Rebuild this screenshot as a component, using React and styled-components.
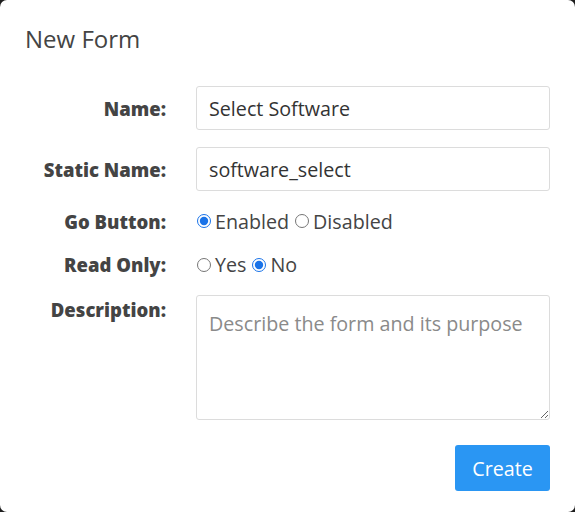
import React, { useState } from "react";
import styled, { createGlobalStyle } from "styled-components";

const GlobalStyle = createGlobalStyle`
  html, body {
    margin: 0;
    padding: 0;
    background: #1e1e1e;
  }
  * {
    box-sizing: border-box;
  }
`;

const Card = styled.div`
  width: 575px;
  height: 512px;
  background: #fff;
  border-radius: 7px;
  padding: 22px 25px 20px 25px;
  font-family: "Open Sans", Lato, sans-serif;
  color: #333;
`;

const Title = styled.h2`
  margin: 0 0 30px 0;
  font-size: 24px;
  font-weight: 400;
  color: #444;
  line-height: 34px;
`;

const FormGrid = styled.div`
  display: grid;
  grid-template-columns: 141px 1fr;
  column-gap: 30px;
  row-gap: 17px;
  align-items: center;
`;

const Label = styled.label`
  text-align: right;
  font-size: 18.5px;
  font-weight: 800;
  color: #444;
  white-space: nowrap;
  align-self: ${(p) => (p.$top ? "start" : "center")};
  padding-top: ${(p) => (p.$top ? "2px" : "0")};
`;

const TextInput = styled.input`
  height: 44px;
  width: 100%;
  border: 1px solid #dcdcdc;
  border-radius: 3px;
  padding: 0 12px;
  font-family: inherit;
  font-size: 19.7px;
  color: #333;
  outline: none;
`;

const TextArea = styled.textarea`
  width: 100%;
  height: 125px;
  border: 1px solid #dcdcdc;
  border-radius: 3px;
  padding: 14px 12px;
  font-family: inherit;
  font-size: 19.7px;
  color: #333;
  resize: vertical;
  outline: none;
  &::placeholder {
    color: #8a8a8a;
  }
`;

const RadioGroup = styled.div`
  display: flex;
  align-items: center;
  height: 26.5px;
  font-size: 19.7px;
  color: #444;
`;

const RadioOption = styled.label`
  display: flex;
  align-items: center;
  margin-right: 5px;
  input {
    margin: 0 4px 0 1px;
    width: 14px;
    height: 14px;
    accent-color: #1a73e8;
  }
`;

const Footer = styled.div`
  display: flex;
  justify-content: flex-end;
  margin-top: 25px;
`;

const Button = styled.button`
  height: 46px;
  width: 95px;
  background: #2a96f3;
  color: #fff;
  border: none;
  border-radius: 3px;
  font-family: inherit;
  font-size: 19.7px;
  cursor: pointer;
`;

export default function App() {
  const [goButton, setGoButton] = useState("enabled");
  const [readOnly, setReadOnly] = useState("no");

  return (
    <>
      <GlobalStyle />
      <Card>
        <Title>New Form</Title>
        <FormGrid>
          <Label>Name:</Label>
          <TextInput defaultValue="Select Software" />

          <Label>Static Name:</Label>
          <TextInput defaultValue="software_select" />

          <Label>Go Button:</Label>
          <RadioGroup>
            <RadioOption>
              <input
                type="radio"
                checked={goButton === "enabled"}
                onChange={() => setGoButton("enabled")}
              />
              Enabled
            </RadioOption>
            <RadioOption>
              <input
                type="radio"
                checked={goButton === "disabled"}
                onChange={() => setGoButton("disabled")}
              />
              Disabled
            </RadioOption>
          </RadioGroup>

          <Label>Read Only:</Label>
          <RadioGroup>
            <RadioOption>
              <input
                type="radio"
                checked={readOnly === "yes"}
                onChange={() => setReadOnly("yes")}
              />
              Yes
            </RadioOption>
            <RadioOption>
              <input
                type="radio"
                checked={readOnly === "no"}
                onChange={() => setReadOnly("no")}
              />
              No
            </RadioOption>
          </RadioGroup>

          <Label $top>Description:</Label>
          <TextArea placeholder="Describe the form and its purpose" />
        </FormGrid>
        <Footer>
          <Button>Create</Button>
        </Footer>
      </Card>
    </>
  );
}
